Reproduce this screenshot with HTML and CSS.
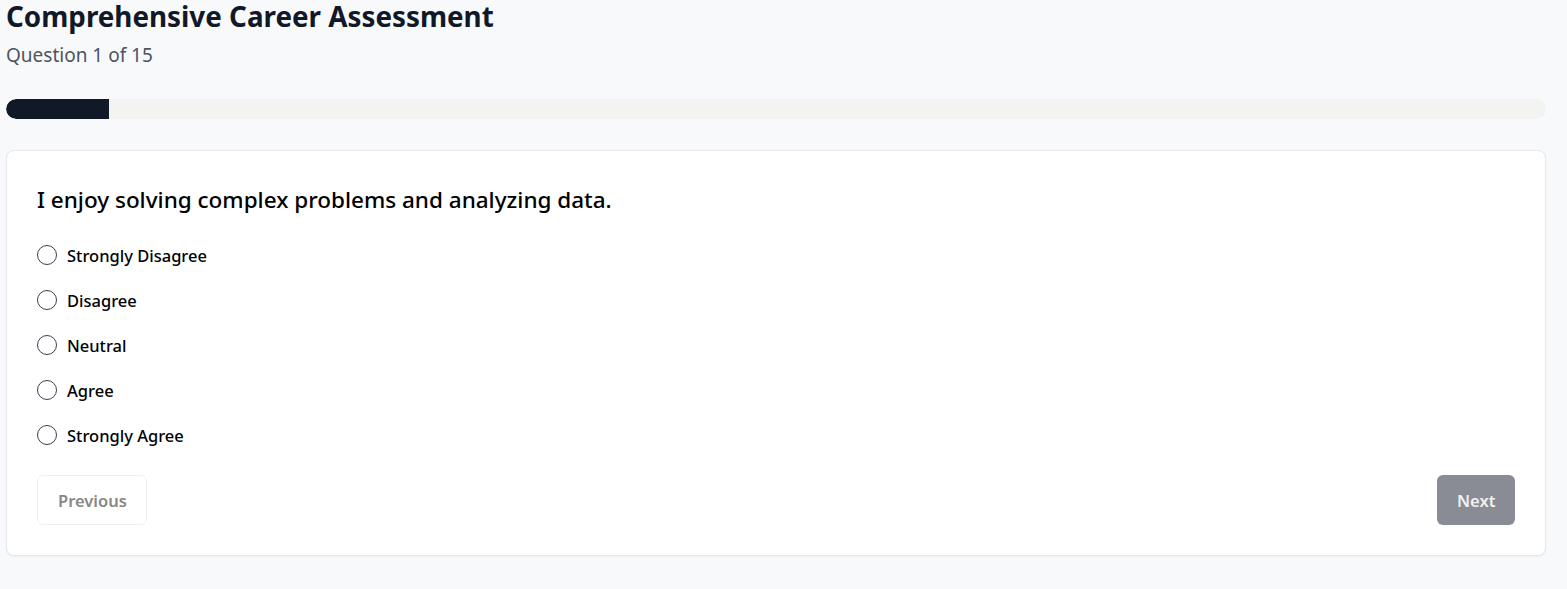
FILE: index.html
```html
<!DOCTYPE html>
<html lang="en">
<head>
<meta charset="utf-8">
<title>Comprehensive Career Assessment</title>
<link rel="stylesheet" href="styles.css">
</head>
<body>
<main class="page">
  <h1 class="title">Comprehensive Career Assessment</h1>
  <p class="subtitle">Question 1 of 15</p>
  <div class="progress"><div class="progress-fill" style="width: 6.67%"></div></div>
  <section class="card">
    <h2 class="question">I enjoy solving complex problems and analyzing data.</h2>
    <div class="options">
      <label class="option"><span class="radio"></span><span class="option-text">Strongly Disagree</span></label>
      <label class="option"><span class="radio"></span><span class="option-text">Disagree</span></label>
      <label class="option"><span class="radio"></span><span class="option-text">Neutral</span></label>
      <label class="option"><span class="radio"></span><span class="option-text">Agree</span></label>
      <label class="option"><span class="radio"></span><span class="option-text">Strongly Agree</span></label>
    </div>
    <div class="actions">
      <button class="btn btn-prev" disabled>Previous</button>
      <button class="btn btn-next" disabled>Next</button>
    </div>
  </section>
</main>
</body>
</html>
```
FILE: styles.css
```css
* { box-sizing: border-box; }
html, body { margin: 0; padding: 0; }
body {
  background: #f8f9fb;
  font-family: "Noto Sans", "Open Sans", sans-serif;
  color: #111827;
}
.page {
  width: 1540px;
  margin-left: 6px;
  padding-bottom: 34px;
}
.title {
  margin: 0;
  font-size: 27.8px;
  line-height: 32px;
  font-weight: 700;
  color: #111827;
}
.subtitle {
  margin: 9px 0 0;
  font-size: 19px;
  line-height: 28px;
  color: #4b5563;
}
.progress {
  margin-top: 30px;
  height: 20px;
  border-radius: 10px;
  background: #f3f3f1;
  overflow: hidden;
}
.progress-fill {
  height: 100%;
  background: #111827;
  border-radius: 10px 0 0 10px;
}
.card {
  margin-top: 30.5px;
  background: #fff;
  border: 1px solid #e5e7eb;
  border-radius: 8px;
  box-shadow: 0 1px 2px rgba(0,0,0,0.05);
  padding: 31.5px 30px 30px;
}
.question {
  margin: 0;
  font-size: 22.5px;
  line-height: 36px;
  font-weight: 500;
  color: #000;
}
.options {
  margin-top: 22px;
  display: flex;
  flex-direction: column;
  gap: 15px;
}
.option {
  display: flex;
  align-items: center;
  gap: 10px;
  height: 30px;
}
.radio {
  width: 20px;
  height: 20px;
  border: 1.5px solid #374151;
  border-radius: 50%;
  background: #fff;
  flex: none;
}
.option-text {
  font-size: 16.5px;
  font-weight: 500;
  color: #000;
}
.actions {
  margin-top: 25px;
  display: flex;
  justify-content: space-between;
}
.btn {
  height: 50px;
  border-radius: 6px;
  font-family: inherit;
  font-size: 16.5px;
  font-weight: 600;
  padding: 0 20px;
}
.btn-prev {
  width: 110px;
  background: #fff;
  border: 1px solid #eeeff1;
  color: #878787;
}
.btn-next {
  width: 78px;
  background: #898c94;
  border: none;
  color: #f1f1f1;
}
```
